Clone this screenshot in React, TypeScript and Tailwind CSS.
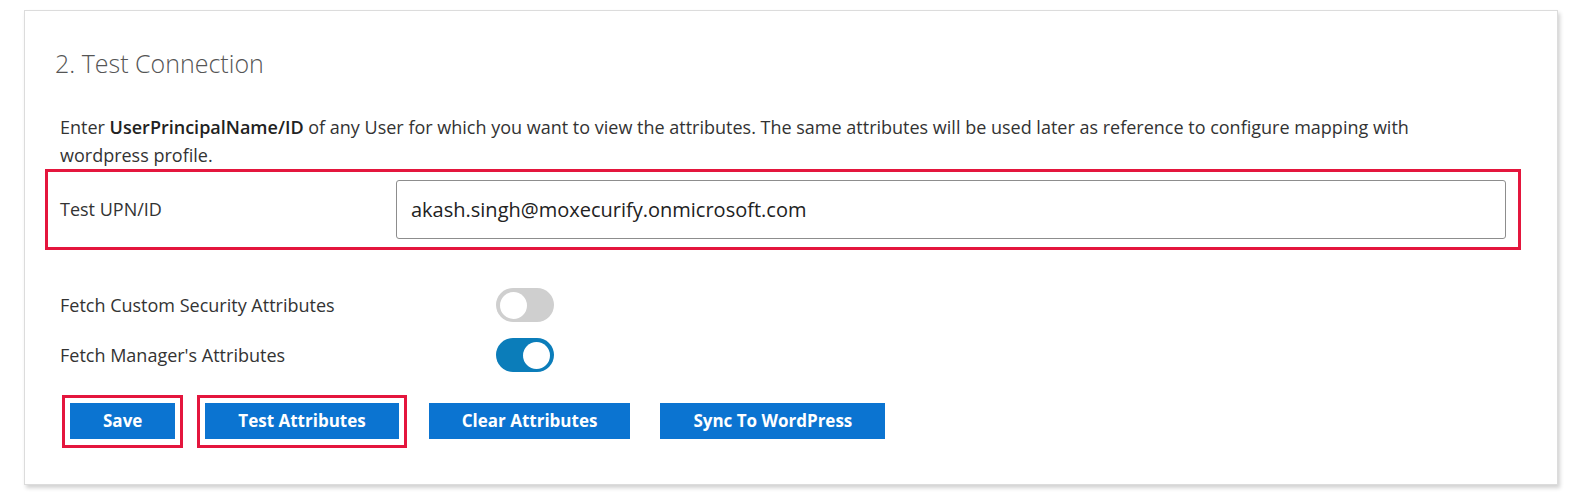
import { useState } from "react";

const font = { fontFamily: '"Open Sans", "Noto Sans", sans-serif' };

function Toggle({ on, onClick }: { on: boolean; onClick: () => void }) {
  return (
    <button
      onClick={onClick}
      className={
        on
          ? "flex items-center justify-end shrink-0 w-[58px] h-[34px] rounded-full bg-[#0b7dba] px-[4px]"
          : "flex items-center justify-start shrink-0 w-[58px] h-[34px] rounded-full bg-[#cfcfcf] px-[4px]"
      }
    >
      <span className="block w-[27px] h-[27px] rounded-full bg-white" />
    </button>
  );
}

function ActionButton({ label, marked }: { label: string; marked?: boolean }) {
  return (
    <div className="relative">
      {marked && (
        <div className="absolute -left-[8px] -right-[8px] -top-[8px] -bottom-[9px] border-[3px] border-[#e4163d]" />
      )}
      <button className="relative h-[36px] px-[33px] bg-[#0b74d1] text-white text-[17px] font-bold">
        {label}
      </button>
    </div>
  );
}

export default function App() {
  const [customSec, setCustomSec] = useState(false);
  const [manager, setManager] = useState(true);
  const [upn, setUpn] = useState("akash.singh@moxecurify.onmicrosoft.com");

  return (
    <div className="w-[1586px] h-[498px] bg-white pt-[10px] pl-[24px]" style={font}>
      <div className="w-[1534px] h-[475px] border border-[#dcdcdc] shadow-[2px_3px_4px_rgba(0,0,0,0.18)] bg-white px-[20px] pt-[36px]">
        {/* Title */}
        <h2 className="ml-[10px] h-[32px] leading-[32px] text-[25px] font-light text-[#555]">
          2. Test Connection
        </h2>

        {/* Description */}
        <p className="ml-[15px] mt-[34px] w-[1440px] text-[18px] leading-[28px] text-[#333]">
          Enter <span className="font-semibold text-[#222]">UserPrincipalName/ID</span> of any User
          for which you want to view the attributes. The same attributes will be used later as
          reference to configure mapping with wordpress profile.
        </p>

        {/* Test UPN row */}
        <div className="flex items-center w-[1476px] border-[3px] border-[#e4163d] py-[8px] pl-[12px] pr-[12px]">
          <label className="w-[336px] shrink-0 text-[18px] text-[#333]">Test UPN/ID</label>
          <input
            value={upn}
            onChange={e => setUpn(e.target.value)}
            className="flex-1 h-[59px] border border-[#8d8d8d] rounded-[3px] px-[14px] text-[20px] text-[#222] outline-none"
          />
        </div>

        {/* Toggles */}
        <div className="ml-[15px] mt-[38px] flex flex-col gap-[16px]">
          <div className="flex items-center">
            <span className="w-[436px] shrink-0 text-[18px] text-[#333]">Fetch Custom Security Attributes</span>
            <Toggle on={customSec} onClick={() => setCustomSec(!customSec)} />
          </div>
          <div className="flex items-center">
            <span className="w-[436px] shrink-0 text-[18px] text-[#333]">Fetch Manager's Attributes</span>
            <Toggle on={manager} onClick={() => setManager(!manager)} />
          </div>
        </div>

        {/* Buttons */}
        <div className="ml-[25px] mt-[31px] flex gap-[30px]">
          <ActionButton label="Save" marked />
          <ActionButton label="Test Attributes" marked />
          <ActionButton label="Clear Attributes" />
          <ActionButton label="Sync To WordPress" />
        </div>
      </div>
    </div>
  );
}
